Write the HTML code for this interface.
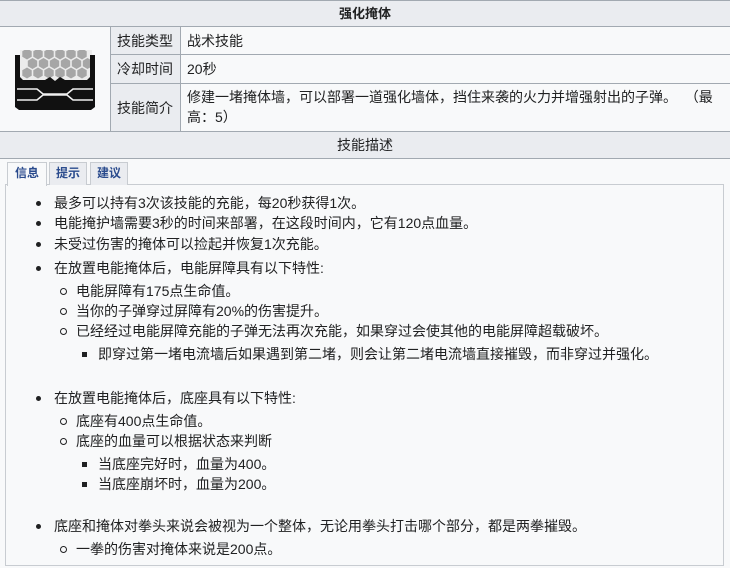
<!DOCTYPE html>
<html><head><meta charset="utf-8"><style>
*{margin:0;padding:0;box-sizing:border-box}
body{width:730px;height:568px;background:#f8f9fa;font-family:"Liberation Sans","Noto Sans CJK SC",sans-serif;font-size:14px;color:#202122;position:relative;overflow:hidden}
.a{position:absolute}
.hdr{background:#eaecf0;text-align:center;border-top:1px solid #a2a9b1;border-bottom:1px solid #a2a9b1;left:0;width:730px}
.lab{background:#eaecf0;border-bottom:1px solid #a2a9b1;border-left:1px solid #a2a9b1;border-right:1px solid #a2a9b1;left:110px;width:71px;padding-left:6px}
.val{left:181px;width:549px;border-bottom:1px solid #a2a9b1;padding-left:6px}
.tab{top:162px;height:23px;border:1px solid #c8ccd1;border-bottom:none;background:#eaecf0;color:#2a4b8d;font-weight:bold;font-size:12px;text-align:center;line-height:21px}
.box{left:5px;top:184px;width:719px;height:382px;border:1px solid #c8ccd1;background:#f8f9fa}
.l{position:absolute;white-space:nowrap;line-height:16px}
.d1::before{content:"";position:absolute;left:-18px;top:6px;width:5px;height:5px;border-radius:50%;background:#202122}
.d2::before{content:"";position:absolute;left:-16px;top:5px;width:5px;height:5px;border-radius:50%;border:1px solid #202122}
.d3::before{content:"";position:absolute;left:-16px;top:6px;width:5px;height:5px;background:#202122}
</style></head><body>
<div class="a hdr" style="top:0;height:27px;line-height:26px;font-weight:bold;font-size:13px">强化掩体</div>
<div class="a" style="left:0;top:27px;width:110px;height:105px;border-bottom:1px solid #a2a9b1">
<svg width="110" height="105" viewBox="0 0 110 105">
<defs><polygon id="h" points="0,-5.5 4.7,-2.8 4.7,2.8 0,5.5 -4.7,2.8 -4.7,-2.8" fill="#a6a6a6"/></defs>
<rect x="20" y="22" width="72" height="33" fill="#ececec"/>
<g>
<use href="#h" x="27" y="27"/><use href="#h" x="38" y="27"/><use href="#h" x="49" y="27"/><use href="#h" x="60" y="27"/><use href="#h" x="71" y="27"/><use href="#h" x="82" y="27"/>
<use href="#h" x="32.5" y="36.5"/><use href="#h" x="43.5" y="36.5"/><use href="#h" x="54.5" y="36.5"/><use href="#h" x="65.5" y="36.5"/><use href="#h" x="76.5" y="36.5"/><use href="#h" x="87.5" y="36.5"/>
<use href="#h" x="27" y="46"/><use href="#h" x="38" y="46"/><use href="#h" x="49" y="46"/><use href="#h" x="60" y="46"/><use href="#h" x="71" y="46"/><use href="#h" x="82" y="46"/>
</g>
<rect x="20" y="20" width="72" height="3" fill="#f8f9fa"/>
<path d="M15 28h5v22l3 3h-8zM95 28h-5v22l-3 3h8z" fill="#111"/>
<path d="M15 53h30l5 -3 5 4 5-4 5 3h30v27l-4 3h-72l-4-3z" fill="#111"/>
<path d="M17 62h20l6 5h24l6-5h20M17 73h20l6-5h24l6 5h20" fill="none" stroke="#f0f0f0" stroke-width="1.6"/>
</svg></div>
<div class="a lab" style="top:27px;height:28px;line-height:28px">技能类型</div>
<div class="a val" style="top:27px;height:28px;line-height:28px">战术技能</div>
<div class="a lab" style="top:55px;height:29px;line-height:29px">冷却时间</div>
<div class="a val" style="top:55px;height:29px;line-height:29px">20秒</div>
<div class="a lab" style="top:84px;height:48px;line-height:48px">技能简介</div>
<div class="a val" style="top:84px;height:48px;line-height:20px;padding-top:3px;padding-right:10px">修建一堵掩体墙，可以部署一道强化墙体，挡住来袭的火力并增强射出的子弹。&nbsp;&nbsp;（最高：5）</div>
<div class="a hdr" style="top:132px;height:27px;line-height:26px;border-top:none">技能描述</div>
<div class="a box"></div>
<div class="a tab" style="left:7px;width:40px;background:#f8f9fa;height:24px">信息</div>
<div class="a tab" style="left:49px;width:38px">提示</div>
<div class="a tab" style="left:90px;width:38px">建议</div>
<div class="l d1" style="left:54px;top:195px">最多可以持有3次该技能的充能，每20秒获得1次。</div>
<div class="l d1" style="left:54px;top:215px">电能掩护墙需要3秒的时间来部署，在这段时间内，它有120点血量。</div>
<div class="l d1" style="left:54px;top:236px">未受过伤害的掩体可以捡起并恢复1次充能。</div>
<div class="l d1" style="left:54px;top:260px">在放置电能掩体后，电能屏障具有以下特性:</div>
<div class="l d2" style="left:76px;top:283px">电能屏障有175点生命值。</div>
<div class="l d2" style="left:76px;top:303px">当你的子弹穿过屏障有20%的伤害提升。</div>
<div class="l d2" style="left:76px;top:323px">已经经过电能屏障充能的子弹无法再次充能，如果穿过会使其他的电能屏障超载破坏。</div>
<div class="l d3" style="left:98px;top:346px">即穿过第一堵电流墙后如果遇到第二堵，则会让第二堵电流墙直接摧毁，而非穿过并强化。</div>
<div class="l d1" style="left:54px;top:390px">在放置电能掩体后，底座具有以下特性:</div>
<div class="l d2" style="left:76px;top:413px">底座有400点生命值。</div>
<div class="l d2" style="left:76px;top:433px">底座的血量可以根据状态来判断</div>
<div class="l d3" style="left:98px;top:456px">当底座完好时，血量为400。</div>
<div class="l d3" style="left:98px;top:476px">当底座崩坏时，血量为200。</div>
<div class="l d1" style="left:54px;top:518px">底座和掩体对拳头来说会被视为一个整体，无论用拳头打击哪个部分，都是两拳摧毁。</div>
<div class="l d2" style="left:76px;top:541px">一拳的伤害对掩体来说是200点。</div>
</body></html>
